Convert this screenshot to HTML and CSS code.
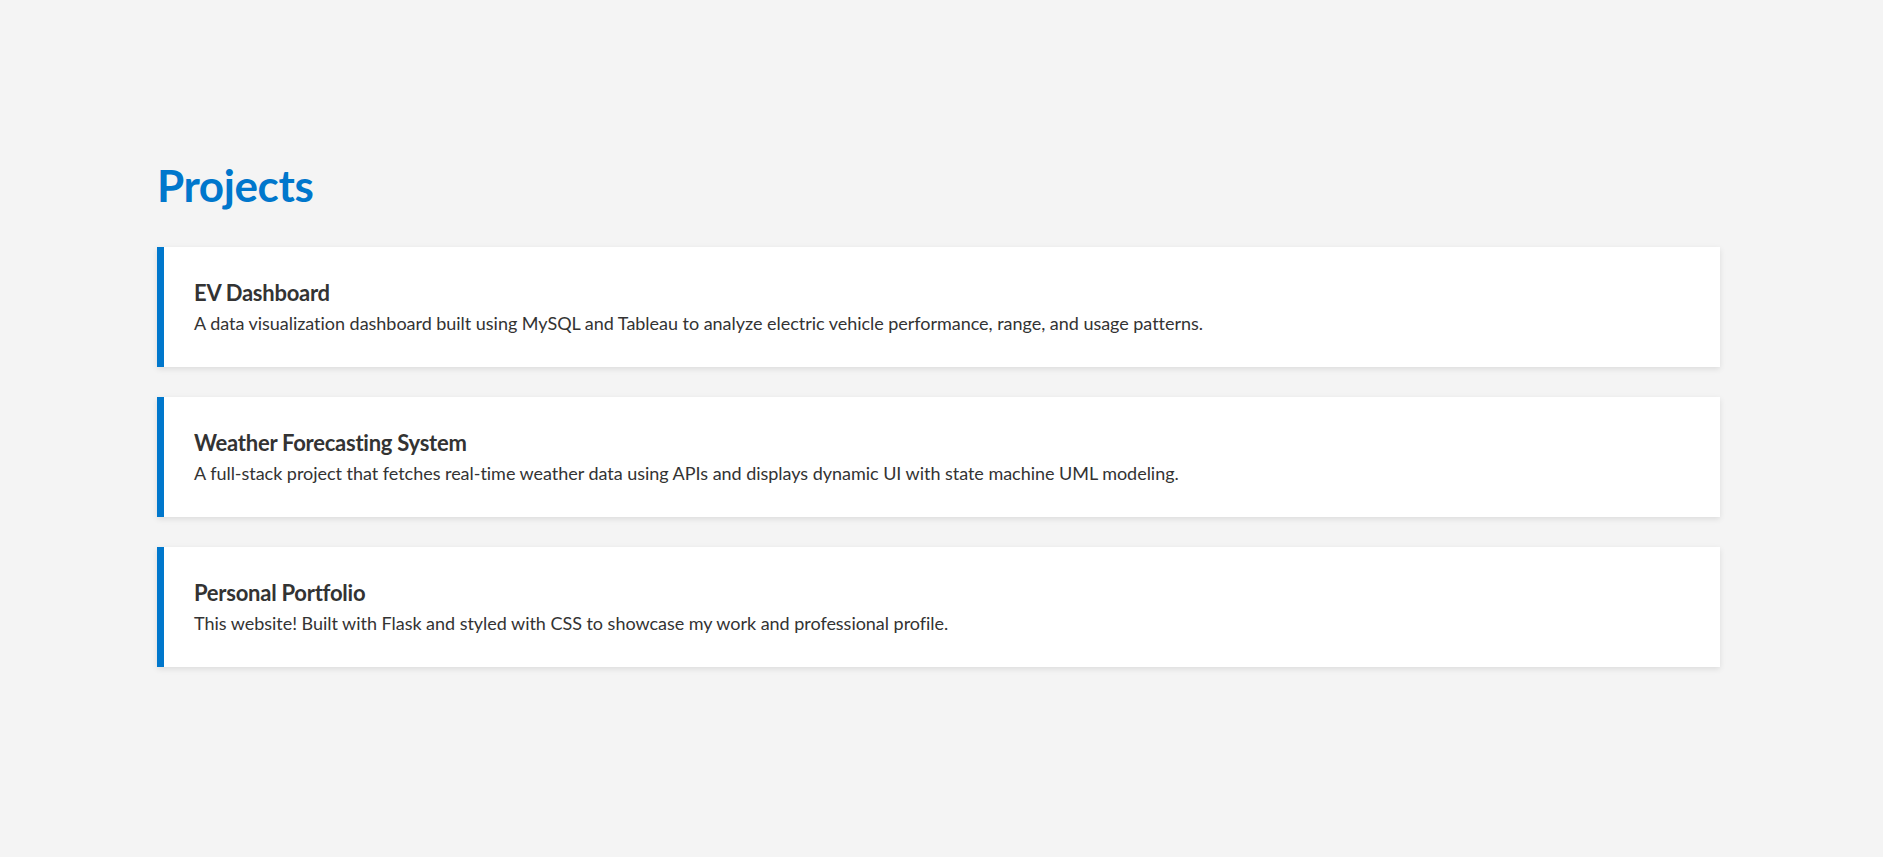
FILE: index.html
```html
<!DOCTYPE html>
<html lang="en">
<head>
<meta charset="utf-8">
<title>Projects</title>
<link rel="stylesheet" href="styles.css">
</head>
<body>
<main class="projects">
  <h1 class="projects-title">Projects</h1>
  <div class="project-list">
    <article class="project-card">
      <h3 class="project-name">EV Dashboard</h3>
      <p class="project-desc">A data visualization dashboard built using MySQL and Tableau to analyze electric vehicle performance, range, and usage patterns.</p>
    </article>
    <article class="project-card">
      <h3 class="project-name">Weather Forecasting System</h3>
      <p class="project-desc">A full-stack project that fetches real-time weather data using APIs and displays dynamic UI with state machine UML modeling.</p>
    </article>
    <article class="project-card">
      <h3 class="project-name">Personal Portfolio</h3>
      <p class="project-desc">This website! Built with Flask and styled with CSS to showcase my work and professional profile.</p>
    </article>
  </div>
</main>
</body>
</html>
```
FILE: styles.css
```css
html, body {
  margin: 0;
  padding: 0;
}

body {
  background: #f4f4f4;
  color: #333;
  font-family: "Lato", "Open Sans", sans-serif;
  min-height: 857px;
}

.projects {
  padding: 159px 163px 0 157px;
}

.projects-title {
  margin: 0 0 36px;
  font-size: 44px;
  line-height: 52px;
  font-weight: 700;
  letter-spacing: -0.4px;
  color: #0077cc;
}

.project-list {
  display: flex;
  flex-direction: column;
  gap: 30px;
}

.project-card {
  background: #fff;
  border-left: 7px solid #0077cc;
  padding: 31px 30px 29px 30px;
  box-shadow: 0 2px 6px rgba(0, 0, 0, 0.1);
}

.project-name {
  margin: 0 0 1px;
  font-size: 22px;
  line-height: 30px;
  font-weight: 700;
  letter-spacing: -0.25px;
  color: #333;
}

.project-desc {
  margin: 0;
  font-size: 18px;
  line-height: 29px;
  letter-spacing: -0.03px;
  color: #333;
}
```
